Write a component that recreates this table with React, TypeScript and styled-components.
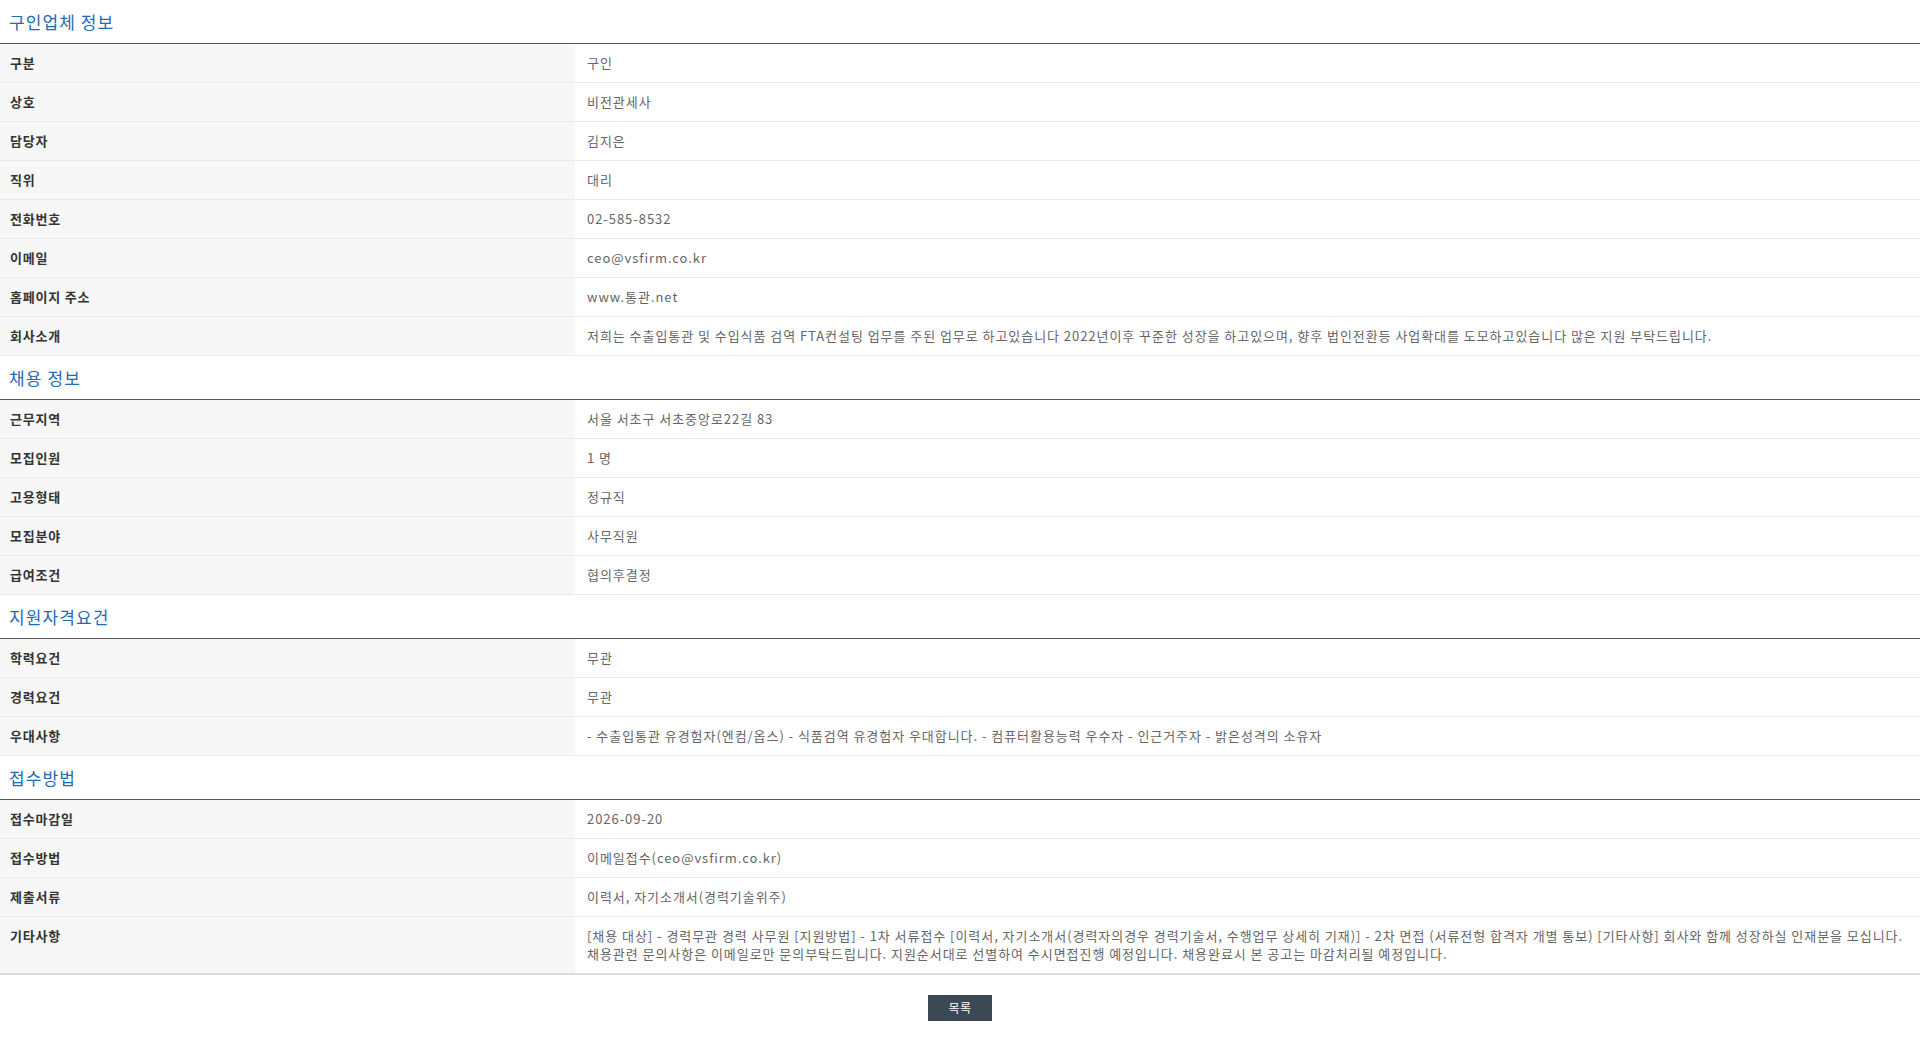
import React from "react";
import styled, { createGlobalStyle } from "styled-components";

const Global = createGlobalStyle`
  html, body { margin: 0; padding: 0; background: #fff; }
  body { font-family: "Noto Sans CJK KR", "Noto Sans", sans-serif; color: #333; }
`;

const Page = styled.div`
  display: flex;
  flex-direction: column;
`;

const Section = styled.section`
  display: flex;
  flex-direction: column;
`;

const SectionTitle = styled.h3`
  margin: 0;
  height: 43px;
  padding: 0 9px;
  display: flex;
  align-items: center;
  font-size: 17px;
  font-weight: 400;
  color: #1f6bb5;
  border-bottom: 1px solid #555;
  letter-spacing: 1.1px;
`;

const Table = styled.table`
  width: 100%;
  border-collapse: collapse;
  table-layout: fixed;
`;

const LabelCol = styled.col`
  width: 575px;
`;

const Row = styled.tr<{ $last?: boolean }>`
  border-bottom: ${(p) => (p.$last ? "2px solid #dcdcdc" : "1px solid #e9e9e9")};
`;

const Label = styled.th`
  text-align: left;
  vertical-align: top;
  background: #f7f7f7;
  padding: 10px 10px;
  font-size: 13px;
  line-height: 18px;
  font-weight: 700;
  color: #333;
  letter-spacing: 0.8px;
`;

const Value = styled.td`
  padding: 10px 12px 10px 12px;
  font-size: 13px;
  line-height: 18px;
  color: #666;
  letter-spacing: 0.95px;
  vertical-align: top;
`;

const Line = styled.div``;

const Footer = styled.div`
  display: flex;
  justify-content: center;
  padding: 20px 0;
`;

const ListButton = styled.button`
  width: 64px;
  height: 26px;
  border: 0;
  background: #3d4855;
  color: #fff;
  font-family: "Noto Sans CJK KR", "Noto Sans", sans-serif;
  font-size: 12px;
  line-height: 26px;
  letter-spacing: 0.5px;
  padding: 0;
  cursor: pointer;
`;

type Item = { label: string; value: string | string[] };

const sections: { title: string; items: Item[] }[] = [
  {
    title: "구인업체 정보",
    items: [
      { label: "구분", value: "구인" },
      { label: "상호", value: "비전관세사" },
      { label: "담당자", value: "김지은" },
      { label: "직위", value: "대리" },
      { label: "전화번호", value: "02-585-8532" },
      { label: "이메일", value: "ceo@vsfirm.co.kr" },
      { label: "홈페이지 주소", value: "www.통관.net" },
      {
        label: "회사소개",
        value:
          "저희는 수출입통관 및 수입식품 검역 FTA컨설팅 업무를 주된 업무로 하고있습니다 2022년이후 꾸준한 성장을 하고있으며, 향후 법인전환등 사업확대를 도모하고있습니다 많은 지원 부탁드립니다.",
      },
    ],
  },
  {
    title: "채용 정보",
    items: [
      { label: "근무지역", value: "서울 서초구 서초중앙로22길 83" },
      { label: "모집인원", value: "1 명" },
      { label: "고용형태", value: "정규직" },
      { label: "모집분야", value: "사무직원" },
      { label: "급여조건", value: "협의후결정" },
    ],
  },
  {
    title: "지원자격요건",
    items: [
      { label: "학력요건", value: "무관" },
      { label: "경력요건", value: "무관" },
      {
        label: "우대사항",
        value:
          "- 수출입통관 유경험자(엔컴/옵스) - 식품검역 유경험자 우대합니다. - 컴퓨터활용능력 우수자 - 인근거주자 - 밝은성격의 소유자",
      },
    ],
  },
  {
    title: "접수방법",
    items: [
      { label: "접수마감일", value: "2026-09-20" },
      { label: "접수방법", value: "이메일접수(ceo@vsfirm.co.kr)" },
      { label: "제출서류", value: "이력서, 자기소개서(경력기술위주)" },
      {
        label: "기타사항",
        value: [
          "[채용 대상] - 경력무관 경력 사무원 [지원방법] - 1차 서류접수 [이력서, 자기소개서(경력자의경우 경력기술서, 수행업무 상세히 기재)] - 2차 면접 (서류전형 합격자 개별 통보) [기타사항] 회사와 함께 성장하실 인재분을 모십니다.",
          "채용관련 문의사항은 이메일로만 문의부탁드립니다. 지원순서대로 선별하여 수시면접진행 예정입니다. 채용완료시 본 공고는 마감처리될 예정입니다.",
        ],
      },
    ],
  },
];

export default function App() {
  return (
    <Page>
      <Global />
      {sections.map((s, si) => (
        <Section key={s.title}>
          <SectionTitle>{s.title}</SectionTitle>
          <Table>
            <colgroup>
              <LabelCol />
              <col />
            </colgroup>
            <tbody>
              {s.items.map((it, ii) => (
                <Row
                  key={it.label}
                  $last={si === sections.length - 1 && ii === s.items.length - 1}
                >
                  <Label>{it.label}</Label>
                  <Value>
                    {Array.isArray(it.value)
                      ? it.value.map((l) => <Line key={l}>{l}</Line>)
                      : it.value}
                  </Value>
                </Row>
              ))}
            </tbody>
          </Table>
        </Section>
      ))}
      <Footer>
        <ListButton>목록</ListButton>
      </Footer>
    </Page>
  );
}
